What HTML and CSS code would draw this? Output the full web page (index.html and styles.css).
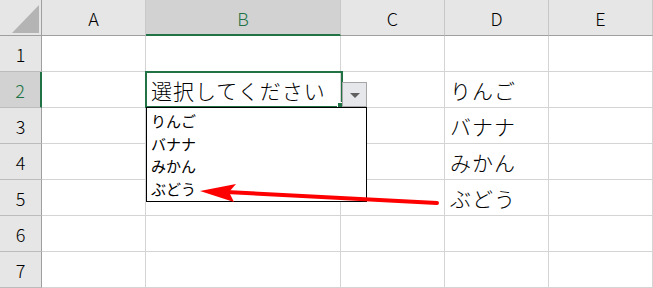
FILE: index.html
```html
<!DOCTYPE html>
<html lang="ja">
<head>
    <meta charset="UTF-8">
    <title>入力規則のリスト</title>
    <link rel="stylesheet" href="styles.css">
</head>
<body>
    <div class="sheet">
        <div class="grid">
            <div class="corner">
                <svg width="42" height="35" viewBox="0 0 42 35"><polygon points="12,33 39,5 39,33" fill="#b4b4b4"/></svg>
            </div>
            <div class="col-head">A</div>
            <div class="col-head is-active">B</div>
            <div class="col-head">C</div>
            <div class="col-head">D</div>
            <div class="col-head">E</div>

            <div class="row-head">1</div>
            <div class="cell"></div><div class="cell"></div><div class="cell"></div><div class="cell"></div><div class="cell"></div>

            <div class="row-head is-active">2</div>
            <div class="cell"></div><div class="cell">選択してください</div><div class="cell"></div><div class="cell">りんご</div><div class="cell"></div>

            <div class="row-head">3</div>
            <div class="cell"></div><div class="cell"></div><div class="cell"></div><div class="cell">バナナ</div><div class="cell"></div>

            <div class="row-head">4</div>
            <div class="cell"></div><div class="cell"></div><div class="cell"></div><div class="cell">みかん</div><div class="cell"></div>

            <div class="row-head">5</div>
            <div class="cell"></div><div class="cell"></div><div class="cell"></div><div class="cell">ぶどう</div><div class="cell"></div>

            <div class="row-head">6</div>
            <div class="cell"></div><div class="cell"></div><div class="cell"></div><div class="cell"></div><div class="cell"></div>

            <div class="row-head">7</div>
            <div class="cell"></div><div class="cell"></div><div class="cell"></div><div class="cell"></div><div class="cell"></div>
        </div>

        <!-- 選択中のセル B2 と入力規則のドロップダウン -->
        <div class="selection"><span class="fill-handle"></span></div>
        <div class="dropdown-btn"><span class="dropdown-tri"></span></div>
        <ul class="dropdown-list">
            <li>りんご</li>
            <li>バナナ</li>
            <li>みかん</li>
            <li>ぶどう</li>
        </ul>

        <svg class="arrow" width="653" height="288" viewBox="0 0 653 288">
            <line x1="437" y1="203" x2="226" y2="192" stroke="#ff0000" stroke-width="4" stroke-linecap="round"/>
            <polygon points="200,191 236,184 229,192 234,202" fill="#ff0000"/>
        </svg>
    </div>
</body>
</html>
```

FILE: styles.css
```css
body {
    margin: 0;
    font-family: "Noto Sans CJK JP", "Noto Sans", sans-serif;
    background-color: #ffffff;
    color: #000;
}
.sheet {
    position: relative;
    width: 653px;
    height: 288px;
    overflow: hidden;
}
.grid {
    display: grid;
    grid-template-columns: 42px 104px 195px 104px 104px 104px;
    grid-template-rows: repeat(8, 36px);
}
.corner {
    background-color: #e6e6e6;
    border-right: 1px solid #9f9f9f;
    border-bottom: 1px solid #9f9f9f;
    box-sizing: border-box;
}
.corner svg {
    display: block;
}
.col-head {
    background-color: #e6e6e6;
    border-right: 1px solid #c8c8c8;
    border-bottom: 1px solid #9f9f9f;
    box-sizing: border-box;
    display: flex;
    align-items: center;
    justify-content: center;
    font-size: 18px;
    font-weight: 300;
    padding-top: 1px;
}
.col-head.is-active {
    background-color: #d2d2d2;
    color: #217346;
    border-bottom: 2px solid #217346;
}
.row-head {
    background-color: #e6e6e6;
    border-right: 1px solid #9f9f9f;
    border-bottom: 1px solid #bcbcbc;
    box-sizing: border-box;
    display: flex;
    align-items: center;
    justify-content: center;
    font-size: 18px;
    font-weight: 300;
}
.row-head.is-active {
    background-color: #d2d2d2;
    color: #217346;
    border-right: 2px solid #217346;
}
.cell {
    border-right: 1px solid #d4d4d4;
    border-bottom: 1px solid #d4d4d4;
    box-sizing: border-box;
    display: flex;
    align-items: center;
    padding-left: 5px;
    font-size: 21px;
    font-weight: 300;
    letter-spacing: 1px;
    white-space: nowrap;
}
.selection {
    position: absolute;
    left: 145px;
    top: 71px;
    width: 198px;
    height: 37px;
    border: 2px solid #217346;
    box-sizing: border-box;
}
.fill-handle {
    position: absolute;
    right: -3px;
    bottom: -3px;
    width: 5px;
    height: 5px;
    background-color: #217346;
    border: 1px solid #fff;
}
.dropdown-btn {
    position: absolute;
    left: 342px;
    top: 82px;
    width: 25px;
    height: 25px;
    background-color: #e5e7ea;
    border: 1px solid #a6a6a6;
    box-sizing: border-box;
    display: flex;
    align-items: center;
    justify-content: center;
}
.dropdown-tri {
    width: 0;
    height: 0;
    border-left: 5px solid transparent;
    border-right: 5px solid transparent;
    border-top: 5px solid #5f5f5f;
    margin-top: 1px;
}
.dropdown-list {
    position: absolute;
    left: 146px;
    top: 107px;
    width: 221px;
    height: 95px;
    margin: 0;
    padding: 2px 0 0 0;
    list-style: none;
    background-color: #ffffff;
    border: 1px solid #000;
    box-sizing: border-box;
}
.dropdown-list li {
    font-size: 15px;
    line-height: 22.5px;
    padding-left: 4px;
}
.arrow {
    position: absolute;
    left: 0;
    top: 0;
}
```
